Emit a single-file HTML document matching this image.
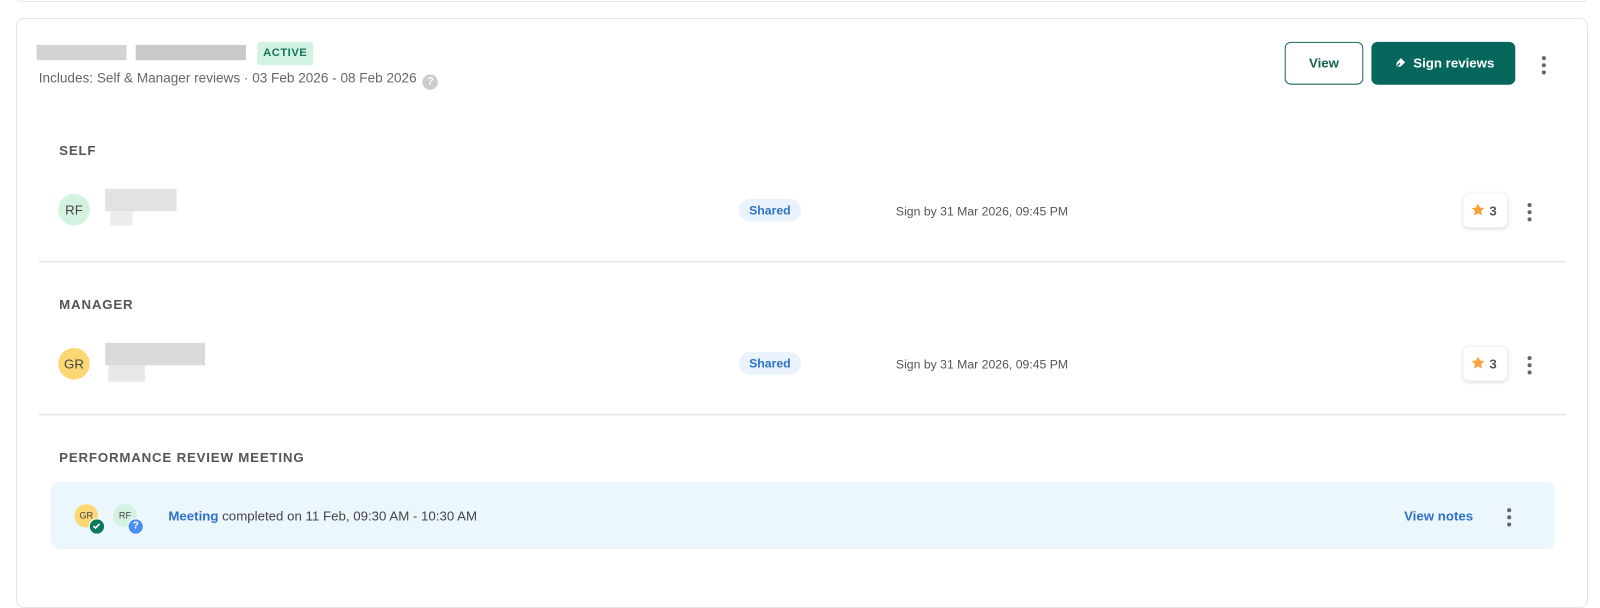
<!DOCTYPE html>
<html><head><meta charset="utf-8"><style>
*{box-sizing:border-box;margin:0;padding:0}
body{width:1600px;height:590px;background:#fff;font-family:"Liberation Sans",Arial,sans-serif;position:relative;overflow:hidden;color:#333}
.abs{position:absolute}
.wrap{position:absolute;left:0;top:0;width:1568px;height:580px;transform:scale(1.0204);transform-origin:0 0}
.top{left:16px;top:-10px;width:1572px;height:12px;border:1px solid #e6e6e6;border-radius:6px}
.card{left:16px;top:18px;width:1572px;height:590px;border:1px solid #e4e4e4;border-radius:8px}
.blur{position:absolute;background:#d0d0d0}
.badge{left:252px;top:41px;width:55px;height:23px;background:#d2f3e2;border-radius:3px;color:#17735a;font-size:11px;font-weight:bold;letter-spacing:.5px;text-align:center;line-height:23px}
.sub{left:38px;top:69px;font-size:13.3px;color:#666}
.q{display:inline-block;width:15px;height:15px;border-radius:50%;background:#ccc;color:#fff;font-size:11px;font-weight:bold;text-align:center;line-height:15px;margin-left:6px;vertical-align:-2px}
.btnv{left:1259px;top:41px;width:77px;height:42px;border:1px solid #1b6b5c;border-radius:6px;color:#17624f;font-size:13px;font-weight:bold;text-align:center;line-height:40px}
.btns{left:1344px;top:41px;width:141px;height:42px;background:#05675b;border-radius:6px;color:#fff;font-size:13px;font-weight:bold;line-height:42px;padding-left:41px}
.dots{width:4px}
.dots i{display:block;width:4px;height:4px;border-radius:50%;background:#666;margin-bottom:3px}
.h{font-size:13px;color:#555;letter-spacing:.8px;font-weight:bold}
.av{width:31px;height:31px;border-radius:50%;font-size:13px;text-align:center;line-height:31px;color:#444}
.shared{width:61px;height:22px;border-radius:11px;background:#eaf3fd;color:#2d72c8;font-size:12px;font-weight:bold;text-align:center;line-height:22px}
.sign{font-size:12px;color:#555}
.star{width:43px;height:33px;border-radius:6px;background:#fff;box-shadow:0 1px 4px rgba(0,0,0,.15);font-size:13px;font-weight:bold;color:#555;line-height:33px;padding-left:7px}
.sep{left:38px;width:1497px;height:1px;background:#ddd}
.meet{left:50px;top:472px;width:1474px;height:66px;background:#ecf6fd;border-radius:8px}
</style></head><body>
<div class="abs top"></div>
<div class="abs card"></div>
<div class="wrap">
<div class="blur" style="left:36px;top:44px;width:88px;height:15px;background:#d3d3d3"></div>
<div class="blur" style="left:133px;top:44px;width:108px;height:15px;background:#c9c9c9"></div>
<div class="abs badge">ACTIVE</div>
<div class="abs sub">Includes: Self &amp; Manager reviews · 03 Feb 2026 - 08 Feb 2026<span class="q">?</span></div>
<div class="abs btnv">View</div>
<div class="abs btns">Sign reviews</div>
<svg class="abs" style="left:1366px;top:56px" width="12" height="12" viewBox="0 0 12 12"><path d="M2 10 L3 5 L7 1 L11 5 L7 9 Z" fill="#fff"/><path d="M2 10 L6 6" stroke="#05675b" stroke-width="1.3"/></svg>
<div class="abs dots" style="left:1511px;top:55px"><i></i><i></i><i></i></div>

<div class="abs h" style="left:58px;top:140px">SELF</div>
<div class="abs av" style="left:57px;top:190px;background:#d3f3e0">RF</div>
<div class="blur" style="left:103px;top:185px;width:70px;height:22px;background:#e2e2e2"></div>
<div class="blur" style="left:108px;top:207px;width:22px;height:14px;background:#ececec"></div>
<div class="abs shared" style="left:724px;top:195px">Shared</div>
<div class="abs sign" style="left:878px;top:200px">Sign by 31 Mar 2026, 09:45 PM</div>
<div class="abs star" style="left:1434px;top:190px"><svg width="15" height="15" viewBox="0 0 24 24" style="vertical-align:-2px"><path d="M12 2l3 6.5 7 .8-5.2 4.8 1.5 7L12 17.5 5.7 21l1.5-7L2 9.3l7-.8z" fill="#f7a23b"/></svg> 3</div>
<div class="abs dots" style="left:1497px;top:199px"><i></i><i></i><i></i></div>
<div class="abs sep" style="top:256px"></div>

<div class="abs h" style="left:58px;top:291px">MANAGER</div>
<div class="abs av" style="left:57px;top:341px;background:#fcd874">GR</div>
<div class="blur" style="left:103px;top:336px;width:98px;height:22px;background:#dadada"></div>
<div class="blur" style="left:106px;top:358px;width:36px;height:16px;background:#e8e8e8"></div>
<div class="abs shared" style="left:724px;top:345px">Shared</div>
<div class="abs sign" style="left:878px;top:350px">Sign by 31 Mar 2026, 09:45 PM</div>
<div class="abs star" style="left:1434px;top:340px"><svg width="15" height="15" viewBox="0 0 24 24" style="vertical-align:-2px"><path d="M12 2l3 6.5 7 .8-5.2 4.8 1.5 7L12 17.5 5.7 21l1.5-7L2 9.3l7-.8z" fill="#f7a23b"/></svg> 3</div>
<div class="abs dots" style="left:1497px;top:349px"><i></i><i></i><i></i></div>
<div class="abs sep" style="top:406px"></div>

<div class="abs h" style="left:58px;top:441px">PERFORMANCE REVIEW MEETING</div>
<div class="abs meet"></div>
<div class="abs av" style="left:73px;top:494px;width:23px;height:23px;line-height:23px;font-size:9px;background:#fcd874">GR</div>
<div class="abs" style="left:87px;top:508px;width:16px;height:16px;border-radius:50%;background:#08795b;border:1.5px solid #fff"><svg width="13" height="13" viewBox="0 0 13 13" style="position:absolute;left:0;top:0"><path d="M3.5 6.5l2 2 4-4" stroke="#fff" stroke-width="1.6" fill="none"/></svg></div>
<div class="abs av" style="left:111px;top:494px;width:23px;height:23px;line-height:23px;font-size:9px;background:#d3f3e0">RF</div>
<div class="abs" style="left:125px;top:508px;width:16px;height:16px;border-radius:50%;background:#4a8ef0;border:1.5px solid #fff;color:#fff;font-size:10px;font-weight:bold;text-align:center;line-height:13px">?</div>
<div class="abs" style="left:165px;top:498px;font-size:13px;color:#444"><span style="color:#2d72c8;font-weight:bold">Meeting</span> completed on 11 Feb, 09:30 AM - 10:30 AM</div>
<div class="abs" style="left:1376px;top:498px;font-size:13px;color:#2d72c8;font-weight:bold">View notes</div>
<div class="abs dots" style="left:1477px;top:498px"><i></i><i></i><i></i></div>
</div>
</body></html>
